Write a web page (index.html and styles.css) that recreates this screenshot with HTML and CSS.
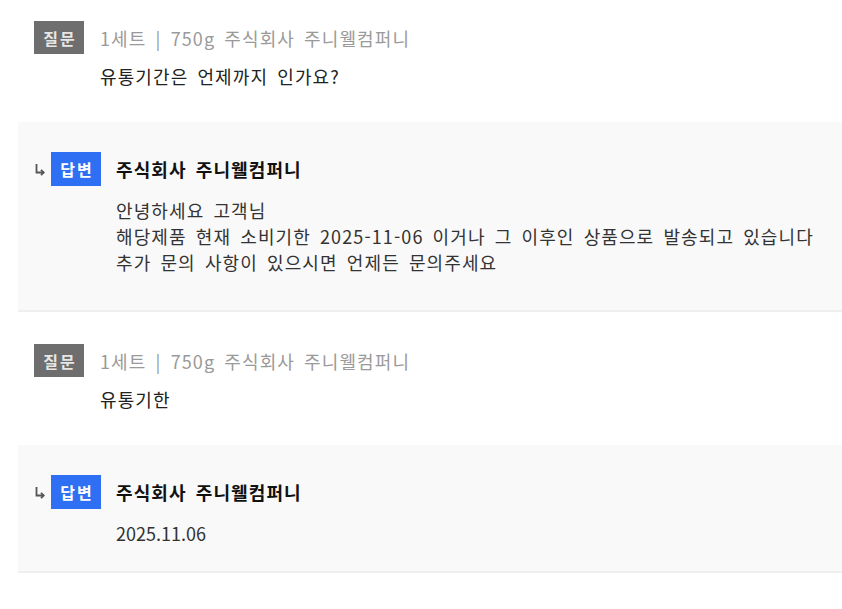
FILE: index.html
```html
<!DOCTYPE html>
<html lang="ko">
<head>
    <meta charset="UTF-8">
    <meta name="viewport" content="width=device-width, initial-scale=1.0">
    <title>상품 문의</title>
    <link rel="stylesheet" href="styles.css">
</head>
<body>
    <div class="qna-list">
        <div class="qna-item">
            <div class="question">
                <div class="q-head">
                    <span class="badge badge-q">질문</span>
                    <span class="meta">1세트 | 750g 주식회사 주니웰컴퍼니</span>
                </div>
                <div class="q-text">유통기간은 언제까지 인가요?</div>
            </div>
            <div class="answer">
                <div class="a-head">
                    <svg class="reply-icon" width="10" height="13" viewBox="0 0 10 13">
                        <path d="M1.5 1 V9.5 H8.5" fill="none" stroke="#555" stroke-width="1.8"/>
                        <path d="M6 6.8 L8.8 9.5 L6 12.2" fill="none" stroke="#555" stroke-width="1.8"/>
                    </svg>
                    <span class="badge badge-a">답변</span>
                    <span class="seller">주식회사 주니웰컴퍼니</span>
                </div>
                <div class="a-text">
                    안녕하세요 고객님<br>
                    해당제품 현재 소비기한 2025-11-06 이거나 그 이후인 상품으로 발송되고 있습니다<br>
                    추가 문의 사항이 있으시면 언제든 문의주세요
                </div>
            </div>
        </div>

        <div class="qna-item">
            <div class="question">
                <div class="q-head">
                    <span class="badge badge-q">질문</span>
                    <span class="meta">1세트 | 750g 주식회사 주니웰컴퍼니</span>
                </div>
                <div class="q-text">유통기한</div>
            </div>
            <div class="answer">
                <div class="a-head">
                    <svg class="reply-icon" width="10" height="13" viewBox="0 0 10 13">
                        <path d="M1.5 1 V9.5 H8.5" fill="none" stroke="#555" stroke-width="1.8"/>
                        <path d="M6 6.8 L8.8 9.5 L6 12.2" fill="none" stroke="#555" stroke-width="1.8"/>
                    </svg>
                    <span class="badge badge-a">답변</span>
                    <span class="seller">주식회사 주니웰컴퍼니</span>
                </div>
                <div class="a-text a-date">2025.11.06</div>
            </div>
        </div>
    </div>
</body>
</html>
```

FILE: styles.css
```css
body {
    margin: 0;
    background: #fff;
    font-family: "Noto Sans CJK KR", "Noto Sans", sans-serif;
    color: #222;
}
.qna-list {
    margin-left: 18px;
}
.question {
    padding: 32px 0 33px 16px;
}
.qna-item:first-child .question {
    padding-top: 21px;
}
.q-head {
    display: flex;
    align-items: center;
    gap: 16px;
    height: 33px;
}
.badge {
    display: inline-flex;
    align-items: center;
    justify-content: center;
    width: 50px;
    height: 33px;
    font-size: 16px;
    font-weight: bold;
    letter-spacing: 2px;
    text-indent: 2px;
    color: #fff;
}
.badge-q {
    background: #6e6e6e;
    color: #e6e6e6;
}
.badge-a {
    background: #2f6ff3;
    height: 34px;
}
.meta,
.q-text,
.seller,
.a-text {
    font-size: 18px;
    letter-spacing: 1.1px;
    word-spacing: 3px;
}
.meta {
    color: #9a9a9a;
}
.q-text {
    margin-top: 9px;
    padding-left: 66px;
    line-height: 26px;
    color: #222;
}
.answer {
    background: #f9f9f9;
    border-bottom: 2px solid #efefef;
    padding: 30px 0 25px 17px;
}
.qna-item:first-child .answer {
    padding-bottom: 35px;
}
.a-head {
    display: flex;
    align-items: center;
    height: 34px;
}
.reply-icon {
    margin-right: 6px;
}
.seller {
    margin-left: 15px;
    font-weight: bold;
    color: #111;
}
.a-text {
    margin-top: 11px;
    padding-left: 81px;
    line-height: 26px;
    color: #333;
}
.a-date {
    letter-spacing: 0;
}
```
